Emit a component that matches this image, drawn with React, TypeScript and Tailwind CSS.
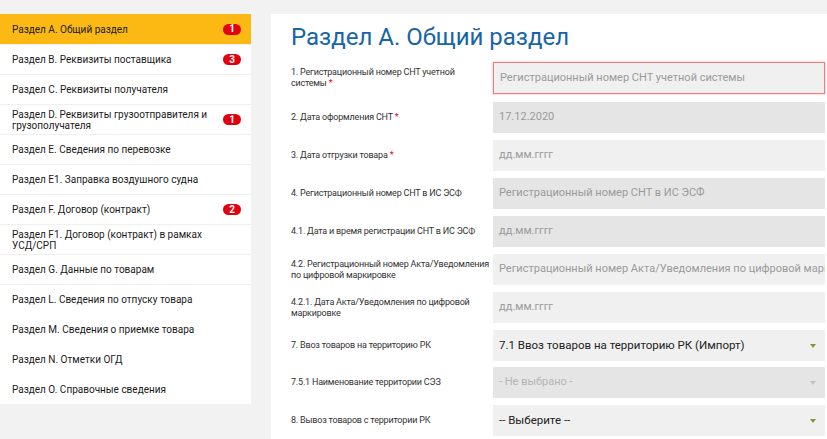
import React from 'react';

const SECTIONS: { label: string; badge?: number; line?: boolean }[] = [
  { label: 'Раздел A. Общий раздел', badge: 1 },
  { label: 'Раздел B. Реквизиты поставщика', badge: 3, line: true },
  { label: 'Раздел C. Реквизиты получателя', line: true },
  { label: 'Раздел D. Реквизиты грузоотправителя и грузополучателя', badge: 1, line: true },
  { label: 'Раздел E. Сведения по перевозке', line: true },
  { label: 'Раздел E1. Заправка воздушного судна', line: true },
  { label: 'Раздел F. Договор (контракт)', badge: 2, line: true },
  { label: 'Раздел F1. Договор (контракт) в рамках УСД/СРП', line: true },
  { label: 'Раздел G. Данные по товарам', line: true },
  { label: 'Раздел L. Сведения по отпуску товара', line: true },
  { label: 'Раздел M. Сведения о приемке товара' },
  { label: 'Раздел N. Отметки ОГД' },
  { label: 'Раздел O. Справочные сведения' },
];

type Field = {
  label: string;
  required?: boolean;
  text: string;
  kind: 'placeholder' | 'value' | 'select' | 'selectMuted';
  disabled?: boolean;
  error?: boolean;
};

const FIELDS: Field[] = [
  { label: '1. Регистрационный номер СНТ учетной системы', required: true, text: 'Регистрационный номер СНТ учетной системы', kind: 'placeholder', error: true },
  { label: '2. Дата оформления СНТ', required: true, text: '17.12.2020', kind: 'placeholder', disabled: true },
  { label: '3. Дата отгрузки товара', required: true, text: 'дд.мм.гггг', kind: 'placeholder' },
  { label: '4. Регистрационный номер СНТ в ИС ЭСФ', text: 'Регистрационный номер СНТ в ИС ЭСФ', kind: 'placeholder', disabled: true },
  { label: '4.1. Дата и время регистрации СНТ в ИС ЭСФ', text: 'дд.мм.гггг', kind: 'placeholder', disabled: true },
  { label: '4.2. Регистрационный номер Акта/Уведомления по цифровой маркировке', text: 'Регистрационный номер Акта/Уведомления по цифровой маркировке', kind: 'placeholder' },
  { label: '4.2.1. Дата Акта/Уведомления по цифровой маркировке', text: 'дд.мм.гггг', kind: 'placeholder' },
  { label: '7. Ввоз товаров на территорию РК', text: '7.1 Ввоз товаров на территорию РК (Импорт)', kind: 'select' },
  { label: '7.5.1 Наименование территории СЭЗ', text: '- Не выбрано -', kind: 'selectMuted', disabled: true },
  { label: '8. Вывоз товаров с территории РК', text: '-- Выберите --', kind: 'select' },
];

function Badge({ n }: { n: number }) {
  return (
    <span className="flex h-[11px] w-[18px] shrink-0 items-center justify-center rounded-full bg-[#e2000f] text-[10px] font-bold leading-none text-white">
      {n}
    </span>
  );
}

function Sidebar() {
  return (
    <div className="w-[251px] shrink-0 self-start bg-white">
      {SECTIONS.map((s, i) => (
        <div
          key={s.label}
          className={
            'flex h-[30px] items-center justify-between pl-[12px] pr-[10px] ' +
            (i === 0 ? 'bg-[#fdb913] ' : '') +
            (s.line ? 'border-t border-[#efefef]' : '')
          }
        >
          <span className="max-w-[205px] text-[10px] leading-[11px] text-[#1a1a1a]">{s.label}</span>
          {s.badge ? <Badge n={s.badge} /> : null}
        </div>
      ))}
    </div>
  );
}

function Label({ f }: { f: Field }) {
  if (!f.required) return <>{f.label}</>;
  // keep the asterisk on the same line as the last word
  const cut = f.label.lastIndexOf(' ');
  return (
    <>
      {f.label.slice(0, cut + 1)}
      <span className="whitespace-nowrap">
        {f.label.slice(cut + 1)}
        <span className="text-[#e2000f]"> *</span>
      </span>
    </>
  );
}

function Control({ f, first }: { f: Field; first: boolean }) {
  const bg = f.disabled ? 'bg-[#e5e5e5]' : 'bg-[#f0f0f0]';
  const border = f.error ? 'border border-[#f07e7e] shadow-[0_0_2px_rgba(240,80,80,0.5)]' : '';
  const color =
    f.kind === 'select' ? 'text-[#222] text-[11.5px]' : f.kind === 'selectMuted' ? 'text-[#b5b5b5] text-[11px]' : 'text-[#9a9a9a] text-[11px]';
  const isSelect = f.kind === 'select' || f.kind === 'selectMuted';
  return (
    <div
      className={
        'relative flex min-w-0 flex-1 items-center overflow-hidden whitespace-nowrap pl-[6px] ' +
        (first ? 'h-[32px] ' : 'h-[31px] ') +
        bg +
        ' ' +
        border +
        ' ' +
        color
      }
    >
      <span>{f.text}</span>
      {isSelect ? (
        <svg
          className="absolute right-[9px] top-1/2 -translate-y-1/2"
          width="6"
          height="4"
          viewBox="0 0 6 4"
        >
          <polygon points="0,0 6,0 3,4" fill={f.kind === 'select' ? '#7c9a3d' : '#c4c4c4'} />
        </svg>
      ) : null}
    </div>
  );
}

function Form() {
  return (
    <div className="min-w-0 flex-1 self-stretch bg-white pl-[20px] pr-[2px]">
      <h1 className="pt-[9px] pb-[11px] text-[24px] font-normal leading-[28px] text-[#1764a7]">
        Раздел А. Общий раздел
      </h1>
      <div className="flex flex-col">
        {FIELDS.map((f, i) => (
          <div key={f.label} className={'flex items-center ' + (i === 0 ? 'mb-[8px]' : i === 7 ? 'mb-[6px]' : 'mb-[7px]')}>
            <div className="w-[202px] shrink-0 text-[9px] leading-[11px] tracking-[-0.2px] text-[#333]">
              <Label f={f} />
            </div>
            <Control f={f} first={i === 0} />
          </div>
        ))}
      </div>
    </div>
  );
}

export default function App() {
  return (
    <div
      className="flex h-[439px] w-[827px] gap-[20px] overflow-hidden bg-[#f2f2f2] pt-[14px]"
      style={{ fontFamily: 'Roboto, "Liberation Sans", sans-serif' }}
    >
      <Sidebar />
      <Form />
    </div>
  );
}
